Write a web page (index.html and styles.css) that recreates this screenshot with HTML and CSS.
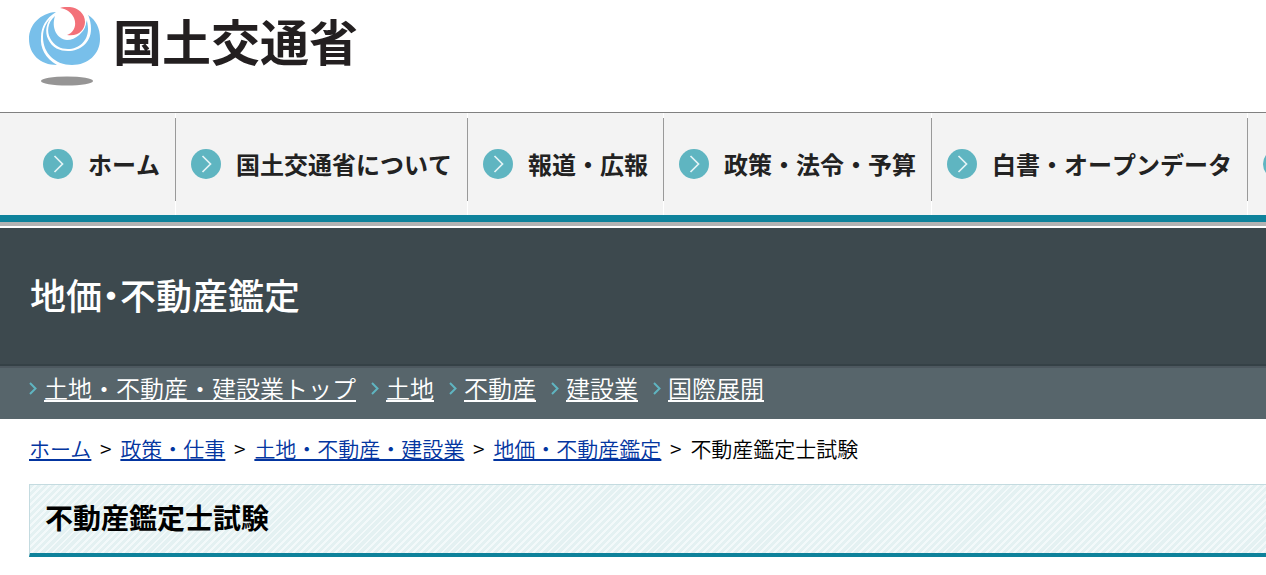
FILE: index.html
```html
<!DOCTYPE html>
<html lang="ja">
<head>
<meta charset="utf-8">
<title>不動産鑑定士試験 - 国土交通省</title>
<link rel="stylesheet" href="styles.css">
</head>
<body>
<svg class="defs" aria-hidden="true">
  <symbol id="go" viewBox="0 0 30 30">
    <circle cx="15" cy="15" r="15" fill="#5fb5c1"/>
    <path d="M11.500 7l8 8-8 8" fill="none" stroke="#e4f4f6" stroke-width="1.700"/>
  </symbol>
  <symbol id="arrow" viewBox="0 0 8 13">
    <path d="M1 1l5.500 5.500L1 12" fill="none" stroke="#5fb5c1" stroke-width="2"/>
  </symbol>
</svg>
<header class="header">
  <a class="brand" href="#">
    <svg class="emblem" viewBox="0 0 72 80" aria-hidden="true">
      <path d="M27 5C11 6 0 18 0 32C0 47 11 58 28 58C16 51 11 41 12 30C12 20 17 11 27 5Z" fill="#78bfea"/>
      <path d="M25 9C17 14 14 22 14 30C14 46 26 58 43 58C59 58 71 47 71 32C71 21 67 13 59 8C61 14 61 20 60 25L40 30Z" fill="#78bfea"/>
      <path d="M26 7C16 14 16 26 19 32C23 41 31 44 39 44C51 44 62 36 62 22C62 17 61 12 59 8L40 0Z" fill="#fff"/>
      <path d="M26 9C18 16 18 25 21 31C25 39 32 42 39 42C50 42 59 34 59 22C59 18 58 15 58 13C55 26 47 33 38 33C28 32 22 21 26 9Z" fill="#78bfea"/>
      <path d="M31 1C44-3 56 4 56 15C56 23 49 30 38 28C45 26 48 18 45 11C43 6 38 2 31 1Z" fill="#f37179" stroke="#fff" stroke-width="2" paint-order="stroke"/>
      <ellipse cx="38" cy="74" rx="26" ry="4.500" fill="#969595"/>
    </svg>
    <span>国土交通省</span>
  </a>
</header>
<nav class="nav" aria-label="メインメニュー">
  <a href="#"><svg aria-hidden="true"><use href="#go"/></svg>ホーム</a>
  <a href="#"><svg aria-hidden="true"><use href="#go"/></svg>国土交通省について</a>
  <a href="#"><svg aria-hidden="true"><use href="#go"/></svg>報道・広報</a>
  <a href="#"><svg aria-hidden="true"><use href="#go"/></svg>政策・法令・予算</a>
  <a href="#"><svg aria-hidden="true"><use href="#go"/></svg>白書・オープンデータ</a>
  <a href="#" aria-label="次のメニュー"><svg aria-hidden="true"><use href="#go"/></svg></a>
</nav>
<div class="hero"><p class="hero-title">地価<span class="dot">・</span>不動産鑑定</p></div>
<ul class="subnav">
  <li><svg aria-hidden="true"><use href="#arrow"/></svg><a href="#">土地・不動産・建設業トップ</a></li>
  <li><svg aria-hidden="true"><use href="#arrow"/></svg><a href="#">土地</a></li>
  <li><svg aria-hidden="true"><use href="#arrow"/></svg><a href="#">不動産</a></li>
  <li><svg aria-hidden="true"><use href="#arrow"/></svg><a href="#">建設業</a></li>
  <li><svg aria-hidden="true"><use href="#arrow"/></svg><a href="#">国際展開</a></li>
</ul>
<main>
  <div class="crumbs">
    <a href="#">ホーム</a><span>&gt;</span><a href="#">政策・仕事</a><span>&gt;</span><a href="#">土地・不動産・建設業</a><span>&gt;</span><a href="#">地価・不動産鑑定</a><span>&gt;</span>不動産鑑定士試験
  </div>
  <h1 class="title">不動産鑑定士試験</h1>
</main>
</body>
</html>
```
FILE: styles.css
```css
* { box-sizing: border-box; }
body {
  margin: 0;
  background: #fff;
  color: #000;
  font-family: "Noto Sans CJK JP", sans-serif;
  overflow-x: hidden;
}
.defs { position: absolute; width: 0; height: 0; }
.header { padding: 7px 29px 25px; }
.brand {
  display: inline-flex;
  align-items: flex-start;
  gap: 12px;
  vertical-align: top;
  color: #231f20;
  font-size: 49px;
  font-weight: 700;
  line-height: 66px;
  text-decoration: none;
}
.emblem { width: 72px; height: 80px; }
.nav {
  display: flex;
  padding-left: 28px;
  overflow: hidden;
  background: #f3f3f3;
  border-top: 1px solid #808080;
  border-bottom: 7px solid #0e829b;
}
.nav a {
  display: flex;
  flex: none;
  align-items: center;
  gap: 15px;
  padding: 33px 16px 33px 15px;
  color: #222;
  font-size: 24px;
  font-weight: 700;
  font-kerning: none;
  line-height: 36px;
  text-decoration: none;
  background: linear-gradient(#fff 5px, #999 5px, #999 88px, #fff 88px) right / 1px 100% no-repeat;
}
.nav svg { width: 30px; height: 30px; }
.hero {
  padding: 39px 30px 43px;
  background: #3d494e;
  border-top: 2px solid #fff;
  border-bottom: 2px solid #354146;
  box-shadow: 0 -4px #b3b3b3;
  margin-top: 4px;
}
.hero-title {
  margin: 0;
  color: #fff;
  font-size: 36px;
  font-weight: 500;
  line-height: 54px;
}
.dot { font-feature-settings: "palt"; }
.subnav {
  display: flex;
  gap: 15px;
  margin: 0;
  padding: 2px 29px 13px;
  list-style: none;
  background: #57656b;
  border-top: 2px solid #4d585f;
  font-size: 24px;
  line-height: 36px;
}
.subnav li { display: flex; align-items: center; gap: 7px; }
.subnav svg { width: 8px; height: 13px; }
.subnav a { color: #fff; }
.subnav a, .crumbs a {
  font-weight: 350;
  text-decoration-thickness: 2px;
  text-underline-offset: 2px;
}
.crumbs {
  display: flex;
  padding: 13px 29px 20px;
  font-size: 21px;
  font-weight: 350;
  line-height: 32px;
}
.crumbs a { color: #0335a0; }
.crumbs span { width: 29px; text-align: center; }
.title {
  margin: 0 0 0 29px;
  padding: 11px 15px 15px;
  border: solid #c4dbe0;
  border-width: 1px 0 4px 1px;
  border-bottom-color: #0e829b;
  background: repeating-linear-gradient(135deg, #e4f1f2 0 3px, #f3f9fa 3px 5px);
  font-size: 28px;
  font-weight: 700;
  line-height: 42px;
}
```
